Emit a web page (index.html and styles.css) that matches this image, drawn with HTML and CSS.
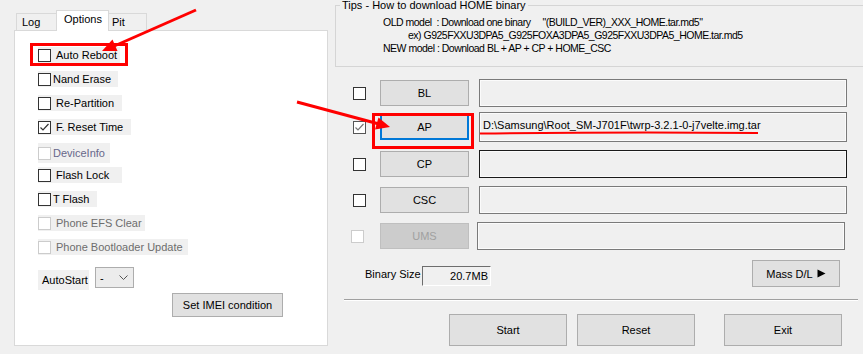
FILE: index.html
```html
<!DOCTYPE html>
<html lang="en">
<head>
    <meta charset="UTF-8">
    <meta name="viewport" content="width=device-width, initial-scale=1.0">
    <title>Odin3</title>
    <link rel="stylesheet" href="styles.css">
</head>
<body>
    <div class="app">
        <div class="left">
            <div class="tabs">
                <div class="tab tab-log">Log</div>
                <div class="tab tab-options active">Options</div>
                <div class="tab tab-pit">Pit</div>
            </div>
            <div class="panel">
                <div class="opts">
                    <label class="opt w-auto"><span class="cb"></span>Auto Reboot</label>
                    <label class="opt w-nand tight"><span class="cb"></span>Nand Erase</label>
                    <label class="opt w-repart"><span class="cb"></span>Re-Partition</label>
                    <label class="opt w-reset"><span class="cb"><svg width="11" height="11" viewBox="0 0 11 11"><path d="M1.5 5.5 L4 8 L9.5 2" fill="none" stroke="#333" stroke-width="1.2"/></svg></span>F. Reset Time</label>
                    <label class="opt w-devinfo tight tall disabled blueish"><span class="cb"></span>DeviceInfo</label>
                    <label class="opt w-lock"><span class="cb"></span>Flash Lock</label>
                    <label class="opt w-tflash tight"><span class="cb"></span>T Flash</label>
                    <label class="opt w-efs disabled"><span class="cb"></span>Phone EFS Clear</label>
                    <label class="opt w-boot disabled"><span class="cb"></span>Phone Bootloader Update</label>
                </div>
                <div class="autostart">
                    <span class="autostart-label">AutoStart</span>
                    <div class="combo">
                        <span>-</span>
                        <svg width="9" height="6" viewBox="0 0 9 6"><path d="M0.5 0.5 L4.5 4.5 L8.5 0.5" fill="none" stroke="#555" stroke-width="1"/></svg>
                    </div>
                </div>
                <button class="btn imei">Set IMEI condition</button>
            </div>
        </div>

        <div class="right">
            <fieldset class="tips">
                <legend>Tips - How to download HOME binary</legend>
                <div class="tip-lines">
                    <div>OLD model&nbsp; : Download one binary&nbsp;&nbsp;&nbsp;&nbsp; "(BUILD_VER)_XXX_HOME.tar.md5"</div>
                    <div class="indent">ex) G925FXXU3DPA5_G925FOXA3DPA5_G925FXXU3DPA5_HOME.tar.md5</div>
                    <div>NEW model : Download BL + AP + CP + HOME_CSC</div>
                </div>
            </fieldset>

            <div class="files">
                <div class="file-row">
                    <span class="cb"></span>
                    <button class="btn file-btn">BL</button>
                    <div class="path"></div>
                </div>
                <div class="file-row ap">
                    <span class="cb cb-soft"><svg width="11" height="11" viewBox="0 0 11 11"><path d="M1.5 5.5 L4 8 L9.5 2" fill="none" stroke="#777" stroke-width="1.2"/></svg></span>
                    <button class="btn file-btn focused">AP</button>
                    <div class="path">D:\Samsung\Root_SM-J701F\twrp-3.2.1-0-j7velte.img.tar</div>
                </div>
                <div class="file-row">
                    <span class="cb"></span>
                    <button class="btn file-btn">CP</button>
                    <div class="path path-dark"></div>
                </div>
                <div class="file-row">
                    <span class="cb"></span>
                    <button class="btn file-btn">CSC</button>
                    <div class="path"></div>
                </div>
                <div class="file-row ums">
                    <span class="cb cb-off"></span>
                    <button class="btn file-btn btn-off">UMS</button>
                    <div class="path"></div>
                </div>
            </div>

            <div class="size-row">
                <span class="size-label">Binary Size</span>
                <div class="size-box">20.7MB</div>
                <button class="btn mass">Mass D/L <svg class="tri" width="9" height="9" viewBox="0 0 9 9"><path d="M0.5 0.5 L8.5 4.5 L0.5 8.5 Z" fill="#000"/></svg></button>
            </div>

            <div class="sep"></div>

            <div class="actions">
                <button class="btn act">Start</button>
                <button class="btn act">Reset</button>
                <button class="btn act exit">Exit</button>
            </div>
        </div>
    </div>

    <!-- red annotations drawn on top of the screenshot -->
    <svg class="marks" width="863" height="354" viewBox="0 0 863 354">
        <g fill="none" stroke="#ff0000" stroke-width="3">
            <rect x="57.5" y="14.5" width="48" height="15"/>
            <rect x="31.5" y="44.5" width="95" height="20"/>
            <rect x="373.5" y="114.5" width="99" height="33"/>
            <line x1="196" y1="10" x2="112" y2="47"/>
            <line x1="297" y1="102" x2="379" y2="124"/>
        </g>
        <polygon points="102,51 117.5,51 112.5,39.5" fill="#ff0000"/>
        <polygon points="390,127 375,129.5 378.5,117.5" fill="#ff0000"/>
        <path d="M480 133.5 Q620 132 758 133" fill="none" stroke="#ff0000" stroke-width="2"/>
    </svg>
</body>
</html>
```

FILE: styles.css
```css
body {
    margin: 0;
    width: 863px;
    height: 354px;
    overflow: hidden;
    position: relative;
    background: #f0f0f0;
    font-family: "Liberation Sans", Arial, sans-serif;
    font-size: 11px;
    color: #000;
}
.app {
    display: flex;
    height: 354px;
}
.left {
    width: 314px;
    margin-left: 14px;
    flex-shrink: 0;
}
.tabs {
    display: flex;
    align-items: flex-end;
    height: 30px;
    margin-left: 2px;
}
.tab {
    box-sizing: border-box;
    height: 17px;
    line-height: 16px;
    border: 1px solid #d9d9d9;
    border-bottom: none;
    background: #f0f0f0;
}
.tab-log {
    width: 41px;
    padding-left: 5px;
}
.tab-options {
    width: 53px;
    margin-left: -1px;
    padding-left: 7px;
}
.tab-pit {
    width: 38px;
    padding-left: 3px;
    border-left: none;
}
.tab.active {
    height: 21px;
    line-height: 17px;
    margin-bottom: -1px;
    background: #fff;
    position: relative;
    z-index: 1;
}
.panel {
    box-sizing: border-box;
    height: 316px;
    border: 1px solid #d9d9d9;
    background: #fff;
    padding: 16px 0 0 23px;
}
.opts {
    display: flex;
    flex-direction: column;
    align-items: flex-start;
    gap: 8px;
}
.opt {
    display: flex;
    align-items: center;
    height: 16px;
    background: #f0f0f0;
}
.opt .cb {
    margin-right: 5px;
}
.opt.tight .cb {
    margin-right: 2px;
}
.opt.tall {
    height: 20px;
    margin-bottom: -4px;
}
.opt.disabled {
    color: #6d6d6d;
}
.opt.disabled .cb {
    border-color: #cccccc;
}
.opt.blueish {
    color: #67678a;
}
.w-auto { width: 82px; }
.w-nand { width: 80px; }
.w-repart { width: 84px; }
.w-reset { width: 93px; }
.w-devinfo { width: 72px; }
.w-lock { width: 84px; }
.w-tflash { width: 59px; }
.w-efs { width: 107px; }
.w-boot { width: 150px; }

.cb {
    box-sizing: border-box;
    width: 13px;
    height: 13px;
    border: 1px solid #333;
    background: #fff;
    flex-shrink: 0;
    display: flex;
    align-items: center;
    justify-content: center;
}
.cb-soft {
    border-color: #555;
}
.cb-off {
    border-color: #cccccc;
}

.autostart {
    display: flex;
    align-items: flex-start;
    margin-top: 12px;
}
.autostart-label {
    box-sizing: border-box;
    width: 51px;
    height: 20px;
    margin-top: 3px;
    padding-left: 4px;
    line-height: 20px;
    background: #f0f0f0;
}
.combo {
    box-sizing: border-box;
    width: 39px;
    height: 21px;
    margin-left: 6px;
    border: 1px solid #adadad;
    background: #ececec;
    display: flex;
    align-items: center;
    justify-content: space-between;
    padding: 0 5px 0 4px;
}

.btn {
    box-sizing: border-box;
    border: 1px solid #adadad;
    background: #e1e1e1;
    font-family: "Liberation Sans", Arial, sans-serif;
    font-size: 11px;
    color: #000;
    padding: 0;
}
.imei {
    display: block;
    width: 111px;
    height: 24px;
    margin: 3px 0 0 134px;
}

.right {
    flex: 1;
    min-width: 0;
}
.tips {
    box-sizing: border-box;
    height: 68px;
    margin: -1px -14px 0 7px;
    padding: 0;
    border: 1px solid #d5d5d5;
}
.tips legend {
    margin-left: 4px;
    padding: 0 2px;
    line-height: 12px;
}
.tip-lines {
    margin-top: 5px;
    padding-left: 47px;
    line-height: 13px;
    font-size: 10.5px;
    letter-spacing: -0.5px;
    white-space: nowrap;
}
.tip-lines .indent {
    padding-left: 25px;
}

.files {
    display: flex;
    flex-direction: column;
    gap: 8px;
    margin-top: 12px;
    padding-left: 25px;
}
.file-row {
    display: flex;
    align-items: center;
    height: 28px;
}
.file-row .cb {
    margin-right: 14px;
}
.file-row.ap {
    height: 30px;
    margin-top: -3px;
}
.ap .path {
    height: 30px;
    line-height: 24px;
    padding-bottom: 4px;
}
.file-btn {
    width: 89px;
    height: 26px;
    margin-right: 10px;
}
.file-btn.focused {
    border: 2px solid #0078d7;
}
.btn-off {
    background: #cccccc;
    border-color: #bfbfbf;
    color: #a0a0a0;
}
.ums .cb {
    margin-left: -2px;
    margin-right: 16px;
}
.ums .path {
    margin-left: -2px;
}
.path {
    box-sizing: border-box;
    width: 368px;
    height: 28px;
    border: 1px solid #7a7a7a;
    box-shadow: inset 0 0 0 1px #fbfbfb;
    background: #f0f0f0;
    padding: 0 0 0 3px;
    line-height: 26px;
    white-space: nowrap;
}
.path-dark {
    border-color: #1a1a1a;
}

.size-row {
    display: flex;
    align-items: center;
    height: 27px;
    margin-top: 10px;
    padding-left: 37px;
}
.size-label {
    width: 57px;
}
.size-box {
    box-sizing: border-box;
    width: 69px;
    height: 20px;
    margin-top: 4px;
    border-top: 1px solid #6d6d6d;
    border-left: 1px solid #6d6d6d;
    border-right: 1px solid #fff;
    border-bottom: 1px solid #fff;
    text-align: right;
    padding-right: 2px;
    line-height: 18px;
}
.mass {
    width: 88px;
    height: 27px;
    margin-left: auto;
    margin-right: 23px;
    display: flex;
    align-items: center;
    justify-content: center;
    gap: 4px;
}
.sep {
    margin: 12px 5px 0 16px;
    border-top: 1px solid #a0a0a0;
    border-bottom: 1px solid #fff;
}
.actions {
    display: flex;
    margin-top: 13px;
    padding-left: 121px;
}
.act {
    width: 118px;
    height: 32px;
    margin-right: 10px;
}
.act.exit {
    margin-left: 19px;
}

.marks {
    position: absolute;
    top: 0;
    left: 0;
    pointer-events: none;
}
```
